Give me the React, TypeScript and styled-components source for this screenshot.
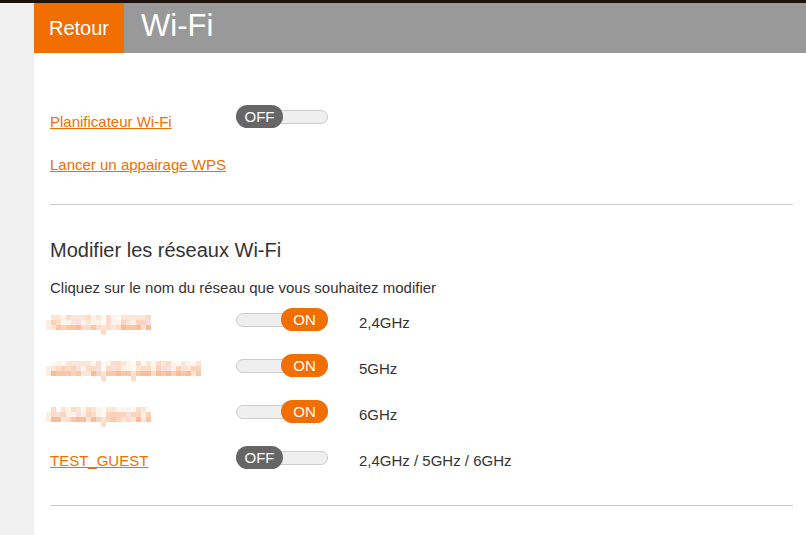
import styled, { createGlobalStyle } from "styled-components";

const GlobalStyle = createGlobalStyle`
  html, body {
    margin: 0;
    padding: 0;
    background: #fff;
    font-family: "Liberation Sans", Arial, sans-serif;
    color: #333;
  }
`;

const ORANGE = "#f16e00";

const PALETTE = [
  "#fde6d6",
  "#fbd3bb",
  "#f9c7a6",
  "#f8bd96",
  "#fff3ea",
  "#f9dfe2",
  "#fcdcc6",
  "#fffaf5",
];

type Network = {
  name: string;
  hidden?: boolean;
  cells?: number;
  underscores?: number[];
  on: boolean;
  band: string;
};

const networks: Network[] = [
  { name: "Livebox_xxxx", hidden: true, cells: 21, underscores: [11], on: true, band: "2,4GHz" },
  { name: "Livebox_xxxx_6ghz", hidden: true, cells: 31, underscores: [11, 17], on: true, band: "5GHz" },
  { name: "Livebox_xxx", hidden: true, cells: 21, underscores: [11], on: true, band: "6GHz" },
  { name: "TEST_GUEST", on: false, band: "2,4GHz / 5GHz / 6GHz" },
];

function pick(seed: number) {
  const x = Math.sin(seed * 12.9898) * 43758.5453;
  return x - Math.floor(x);
}

// blurred SSIDs, drawn as coarse pixel blocks like in the capture
function Pixelated({ cells, underscores, seed }: { cells: number; underscores: number[]; seed: number }) {
  const rows = [0, 1, 2, 3];
  return (
    <PixelGrid $cols={cells}>
      {rows.map((r) =>
        Array.from({ length: cells }).map((_, c) => {
          let color = "transparent";
          if (r === 3) {
            if (underscores.includes(c)) color = "#fcdcc6";
          } else if (underscores.includes(c)) {
            color = r === 2 ? "#fde3d1" : "#fffaf5";
          } else if (c === 0) {
            color = r === 0 ? "transparent" : "#fdeee3";
          } else {
            const v = pick(seed * 97 + r * 31 + c);
            const base = r === 0 ? [0, 4, 0, 7, 6] : r === 1 ? [0, 1, 6, 5, 4, 1] : [1, 2, 3, 2, 6, 0];
            color = PALETTE[base[Math.floor(v * base.length)]];
          }
          return <Pixel key={`${r}-${c}`} style={{ background: color }} />;
        })
      )}
    </PixelGrid>
  );
}

function Toggle({ on }: { on: boolean }) {
  return (
    <ToggleBox>
      <Track />
      <Knob $on={on}>{on ? "ON" : "OFF"}</Knob>
    </ToggleBox>
  );
}

export default function App() {
  return (
    <>
      <GlobalStyle />
      <TopBar />
      <Page>
        <Side />
        <Main>
          <Header>
            <BackButton>Retour</BackButton>
            <Title>Wi-Fi</Title>
          </Header>
          <Content>
            <OptionRow>
              <NameCell>
                <Link>Planificateur Wi-Fi</Link>
              </NameCell>
              <Toggle on={false} />
            </OptionRow>
            <WpsRow>
              <Link>Lancer un appairage WPS</Link>
            </WpsRow>
            <Divider />
            <Heading>Modifier les réseaux Wi-Fi</Heading>
            <Hint>Cliquez sur le nom du réseau que vous souhaitez modifier</Hint>
            <NetworkList>
              {networks.map((n, i) => (
                <NetworkRow key={n.name}>
                  <NameCell>
                    {n.hidden ? (
                      <Pixelated cells={n.cells ?? 20} underscores={n.underscores ?? []} seed={i + 1} />
                    ) : (
                      <Link>{n.name}</Link>
                    )}
                  </NameCell>
                  <Toggle on={n.on} />
                  <Band>{n.band}</Band>
                </NetworkRow>
              ))}
            </NetworkList>
            <BottomDivider />
          </Content>
        </Main>
      </Page>
    </>
  );
}

const TopBar = styled.div`
  height: 3px;
  background: #1e100b;
`;

const Page = styled.div`
  display: flex;
  min-height: 532px;
`;

const Side = styled.div`
  width: 34px;
  flex-shrink: 0;
  background: #f0f0f0;
`;

const Main = styled.div`
  flex: 1;
  display: flex;
  flex-direction: column;
`;

const Header = styled.div`
  display: flex;
  height: 50px;
  background: #999999;
`;

const BackButton = styled.div`
  width: 90px;
  display: flex;
  align-items: center;
  justify-content: center;
  background: ${ORANGE};
  color: #fff;
  font-size: 20px;
`;

const Title = styled.h1`
  margin: 0 0 0 17px;
  font-size: 31px;
  font-weight: normal;
  color: #fff;
  line-height: 46px;
`;

const Content = styled.div`
  padding: 52px 13px 0 16px;
`;

const OptionRow = styled.div`
  display: flex;
  align-items: flex-start;
  height: 23px;
`;

const NameCell = styled.div`
  width: 186px;
  flex-shrink: 0;
  display: flex;
  align-items: center;
  height: 100%;
  padding-top: 9px;
  box-sizing: border-box;
`;

const Link = styled.a`
  color: ${ORANGE};
  text-decoration: underline;
  font-size: 15px;
  line-height: 17px;
  cursor: pointer;
`;

const WpsRow = styled.div`
  margin-top: 28px;
  height: 17px;
  line-height: 17px;
`;

const Divider = styled.hr`
  margin: 31px 0 0;
  border: 0;
  border-top: 1px solid #cccccc;
`;

const BottomDivider = styled(Divider)`
  margin-top: 36px;
`;

const Heading = styled.h2`
  margin: 33px 0 0;
  font-size: 20px;
  font-weight: normal;
  line-height: 24px;
  color: #333;
`;

const Hint = styled.p`
  margin: 17px 0 0;
  font-size: 15px;
  line-height: 17px;
`;

const NetworkList = styled.div`
  display: flex;
  flex-direction: column;
  gap: 23px;
  margin-top: 12px;
`;

const NetworkRow = styled.div`
  display: flex;
  align-items: center;
  height: 23px;

  & > ${NameCell} {
    padding-top: 6px;
  }
`;

const Band = styled.span`
  margin-left: 31px;
  font-size: 15px;
  padding-top: 6px;
`;

const ToggleBox = styled.div`
  position: relative;
  width: 92px;
  height: 23px;
  flex-shrink: 0;
`;

const Track = styled.div`
  position: absolute;
  left: 0;
  right: 0;
  top: 5px;
  height: 12px;
  border: 1px solid #cccccc;
  border-radius: 7px;
  background: #efefef;
`;

const Knob = styled.div<{ $on: boolean }>`
  position: absolute;
  top: 0;
  ${(p) => (p.$on ? "right: 0;" : "left: 0;")}
  width: 47px;
  height: 23px;
  border-radius: 12px;
  background: ${(p) => (p.$on ? ORANGE : "#666666")};
  color: #fff;
  font-size: 15px;
  display: flex;
  align-items: center;
  justify-content: center;
`;

const PixelGrid = styled.div<{ $cols: number }>`
  display: grid;
  grid-template-columns: repeat(${(p) => p.$cols}, 5px);
  grid-auto-rows: 5px;
  margin-left: -4px;
  margin-top: 4px;
`;

const Pixel = styled.span`
  display: block;
`;
